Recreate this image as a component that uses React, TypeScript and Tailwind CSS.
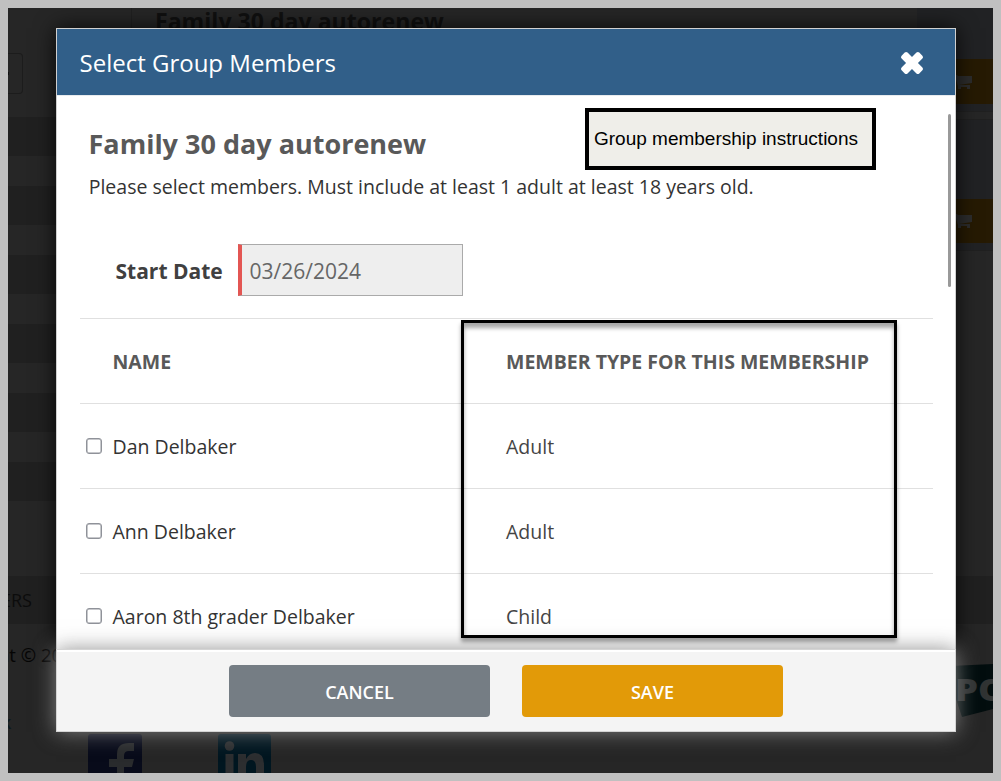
import React from "react";

const members = [
  { name: "Dan Delbaker", type: "Adult" },
  { name: "Ann Delbaker", type: "Adult" },
  { name: "Aaron 8th grader Delbaker", type: "Child" },
];

function CloseIcon() {
  return (
    <svg width="24" height="24" viewBox="-12 -12 24 24" fill="white">
      <rect x="-12.5" y="-4.2" width="25" height="8.4" rx="2" transform="rotate(45)" />
      <rect x="-12.5" y="-4.2" width="25" height="8.4" rx="2" transform="rotate(-45)" />
    </svg>
  );
}

function CartButton({ className }: { className: string }) {
  return (
    <div className={`flex w-full items-center bg-[#261a03] pl-[35px] ${className}`}>
      <svg width="20" height="16" viewBox="0 0 20 16" fill="#2c2c2c">
        <path d="M0 1h5l1 1h14v7l-13 2h11v4h-3v-2H9v2H6v-3L3 3H0z" />
      </svg>
    </div>
  );
}

function Backdrop() {
  return (
    <div className="flex h-full flex-col overflow-hidden bg-[#262626]">
      <div className="flex h-[568px] shrink-0">
        <div className="w-[124px] shrink-0 border-r border-[#202020]">
          <div className="h-[109px] pt-[45px]">
            <div className="flex h-[41px] w-[15px] items-center rounded-r-[4px] border border-l-0 border-[#1c1c1c]">
              <div className="h-[3px] w-px bg-[#111]" />
            </div>
          </div>
          {[0, 1, 2, 3, 4, 5].map((n) => (
            <div key={n} className="h-[69px]">
              <div className="h-[39px] bg-[#202020]" />
            </div>
          ))}
        </div>
        <div className="w-[785px] shrink-0 pl-[23px]">
          <h2 className="-mt-[2px] text-[23.1px] leading-[30px] font-bold text-[#101010]">
            Family 30 day autorenew
          </h2>
        </div>
        <div className="flex w-[76px] shrink-0 flex-col">
          <div className="h-[51px] bg-[#212224]" />
          <CartButton className="h-[45px]" />
          <div className="h-[7px] bg-[#212224]" />
          <div className="h-[9px] border-y border-[#202020]" />
          <div className="h-[79px] bg-[#212224]" />
          <CartButton className="h-[44px]" />
          <div className="h-2 border-b border-[#202020] bg-[#212224]" />
        </div>
      </div>
      <div className="flex h-12 shrink-0 items-center bg-[#202020]">
        <span className="-ml-[7px] text-[18px] text-[#0c0c0c]">ERS</span>
      </div>
      <div className="flex h-[110px] shrink-0 justify-between">
        <div className="pt-[17px]">
          <span className="-ml-[10px] block text-[18.5px] leading-7 text-[#050505]">nt © 2024</span>
          <span className="mt-[41px] -ml-[7px] block text-[18px] leading-6 font-semibold text-[#0c1a20]">k</span>
        </div>
        <svg className="mt-10" width="42" height="56" viewBox="0 0 42 56">
          <path d="M0 2L42 0V45L11 53 0 20z" fill="#020d0e" />
          <text x="4" y="37" fill="#303333" fontFamily="Open Sans, sans-serif" fontSize="30" fontWeight="800" textLength="52" lengthAdjust="spacingAndGlyphs">PO</text>
        </svg>
      </div>
      <div className="flex shrink-0 gap-[76px] pl-20">
        <svg width="54" height="54" viewBox="0 0 54 54">
          <rect width="54" height="54" rx="3" fill="#080b1a" />
          <path d="M29 54V33h-8v-8h8v-5q0-11 12-11h5v8h-5q-5 0-5 5v3h10l-2 8h-8v21z" fill="#292b2d" />
        </svg>
        <svg width="53" height="54" viewBox="0 0 53 54">
          <rect width="53" height="54" rx="3" fill="#001620" />
          <circle cx="11.5" cy="12" r="4.8" fill="#2c2e30" />
          <path d="M7.5 20h8v34h-8zM20 20h8v5q3-6 9-6 9 0 9 12v23h-8V33q0-7-5-7t-5 7v21h-8z" fill="#2c2e30" />
        </svg>
      </div>
    </div>
  );
}

export default function App() {
  return (
    <div className="relative h-[781px] w-[1001px] overflow-hidden bg-[#c0c0c0] p-2 font-['Open_Sans',sans-serif]">
      <div className="h-[765px] w-[985px]">
        <Backdrop />
      </div>

      <div className="absolute inset-2 overflow-hidden">
        <section className="relative mt-5 ml-12 flex h-[704px] w-[900px] flex-col">
          <div className="h-[621px] shrink-0 border border-b-0 border-[#d0d0d0] bg-white shadow-[0_0_20px_rgba(0,0,0,0.8)]">
            <header className="flex h-[67px] items-center justify-between border-b border-[#e8ebee] bg-[#315f89] pr-[31px] pl-[22px]">
              <h1 className="pt-[2px] pl-[0.5px] text-[24px] leading-8 text-white">Select Group Members</h1>
              <button className="mt-[2px]" aria-label="Close">
                <CloseIcon />
              </button>
            </header>

            <div className="h-[553px] overflow-hidden pr-[22px] pl-[23px]">
              <div className="pt-[28px] pl-[9px]">
                <h2 className="-ml-[0.5px] text-[27px] leading-10 font-bold text-[#595959]">Family 30 day autorenew</h2>
                <p className="mt-[9px] -ml-[0.3px] text-[19.5px] leading-7 text-[#333]">
                  Please select members. Must include at least 1 adult at least 18 years old.
                </p>
              </div>
              <div className="mt-[43px] flex h-[52px] items-center pl-[35.5px]">
                <label className="w-[122.5px] pt-px text-[21px] leading-[30px] font-bold text-[#404040]">Start Date</label>
                <div className="flex h-[52px] w-[225px] items-center border border-l-4 border-[#aaa] border-l-[#e35653] bg-[#eee] pt-[2px] pl-[7.5px] text-[21px] leading-[30px] text-[#666]">
                  03/26/2024
                </div>
              </div>
              <div className="mt-[22px] w-[853px]">
                <div className="flex h-[85px] items-center border-t border-[#e0e0e0] pt-[2px] pl-[32.5px] text-[19.5px] font-bold text-[#595959]">
                  <div className="w-[393.5px]">NAME</div>
                  <div className="whitespace-nowrap">MEMBER TYPE FOR THIS MEMBERSHIP</div>
                </div>
                {members.map((m) => (
                  <div key={m.name} className="flex h-[85px] items-center border-t border-[#e0e0e0] pt-px pl-[5.5px] text-[19.5px]">
                    <input
                      type="checkbox"
                      className="-mt-px mr-[11px] size-4 appearance-none rounded-[3px] border border-[#8f9299] bg-white shadow-[inset_0_0_0_0.5px_#8f9299]"
                    />
                    <div className="w-[393.5px] text-[#333]">{m.name}</div>
                    <div className="text-[#444]">{m.type}</div>
                  </div>
                ))}
              </div>
            </div>
          </div>

          <footer className="relative flex h-[83px] shrink-0 justify-center gap-8 border border-[#d4d4d4] bg-[#f4f4f4] pt-[15px] shadow-[0_0_20px_rgba(136,136,136,0.9),inset_0_2px_0_white]">
            <button className="h-[52px] w-[261px] rounded-[4px] bg-[#757d84] pt-[3px] text-[18px] font-semibold text-white">
              CANCEL
            </button>
            <button className="h-[52px] w-[261px] rounded-[4px] bg-[#e29a08] pt-[3px] text-[18px] font-semibold text-white">
              SAVE
            </button>
          </footer>
          <div className="absolute top-[86px] left-[892px] h-[173px] w-[3px] rounded-full bg-[#999]" />
        </section>
      </div>

      <div className="absolute top-[108px] left-[585px] flex h-[62px] w-[291px] items-center border-4 border-black bg-[#efeee9] pl-[5px] font-['Liberation_Sans',sans-serif] text-[19px] whitespace-nowrap text-black">
        Group membership instructions
      </div>
      <div className="absolute top-[320px] left-[461px] h-[318px] w-[436px] border-[3px] border-black shadow-[0_4px_4px_rgba(0,0,0,0.35),inset_0_5px_4px_rgba(0,0,0,0.35)]" />
    </div>
  );
}
